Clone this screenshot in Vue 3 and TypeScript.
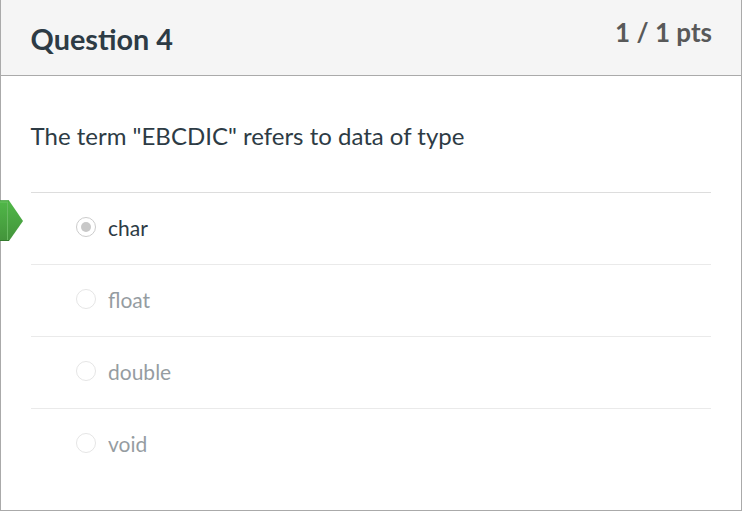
<script setup lang="ts">
interface Answer {
  label: string
  selected: boolean
}

const answers: Answer[] = [
  { label: 'char', selected: true },
  { label: 'float', selected: false },
  { label: 'double', selected: false },
  { label: 'void', selected: false },
]
</script>

<template>
  <section class="question">
    <header class="header">
      <h2 class="title">Question 4</h2>
      <span class="points">1 / 1 pts</span>
    </header>
    <div class="body">
      <p class="prompt">The term "EBCDIC" refers to data of type</p>
      <ul class="answers">
        <li v-for="a in answers" :key="a.label" class="answer" :class="{ selected: a.selected }">
          <svg v-if="a.selected" class="arrow" width="24" height="42" viewBox="0 0 24 42">
            <defs>
              <linearGradient id="arrow-fill" x1="0" y1="0" x2="0" y2="1">
                <stop offset="0" stop-color="#50b848" />
                <stop offset="1" stop-color="#43933b" />
              </linearGradient>
            </defs>
            <path d="M0 .5H9L23 21L9 41H0Z" fill="url(#arrow-fill)" />
            <path d="M0 .9H9" stroke="#3c9a35" />
            <path d="M0 40.5H9" stroke="#347a2d" />
            <path d="M0 2H8" stroke="#6ac463" />
            <path d="M7.5 2V40" stroke="#69b962" />
          </svg>
          <span class="radio"></span>
          <span class="label">{{ a.label }}</span>
        </li>
      </ul>
    </div>
  </section>
</template>

<style>
body {
  margin: 0;
}
</style>

<style scoped>
.question {
  box-sizing: border-box;
  width: 742px;
  height: 511px;
  border: 1px solid #aaa;
  border-top: 0;
  background: #fff;
  color: #2d3b45;
  font-family: Lato, "Liberation Sans", sans-serif;
}
.header {
  box-sizing: border-box;
  display: flex;
  justify-content: space-between;
  height: 76px;
  padding: 0 29px 0 29.6px;
  border-bottom: 1px solid #aaa;
  background: #f5f5f5;
}
.title {
  margin: 21px 0 0;
  font-size: 28.8px;
  line-height: 36px;
  font-weight: 700;
}
.points {
  margin-top: 14px;
  color: #595959;
  font-size: 26px;
  line-height: 36px;
  font-weight: 700;
}
.body {
  padding: 42px 30px 0;
}
.prompt {
  margin: 0 0 0 -0.4px;
  font-size: 24px;
  line-height: 36px;
}
.answers {
  margin: 38px 0 0;
  padding: 0;
  list-style: none;
}
.answer {
  box-sizing: border-box;
  position: relative;
  display: flex;
  height: 72px;
  padding-left: 45px;
  border-top: 1px solid #eaeaea;
}
.answer.selected {
  border-top-color: #ddd;
}
.arrow {
  position: absolute;
  left: -31px;
  top: 7px;
}
.radio {
  box-sizing: border-box;
  display: flex;
  align-items: center;
  justify-content: center;
  width: 20px;
  height: 20px;
  margin-top: 24px;
  border: 1px solid #ccc;
  border-radius: 50%;
  opacity: 0.5;
}
.label {
  margin: 19px 0 0 12px;
  font-size: 21px;
  line-height: 32px;
  opacity: 0.5;
}
.selected .radio,
.selected .label {
  opacity: 1;
}
.selected .radio::after {
  content: "";
  width: 10px;
  height: 10px;
  border-radius: 50%;
  background: #c8c8c8;
}
</style>
